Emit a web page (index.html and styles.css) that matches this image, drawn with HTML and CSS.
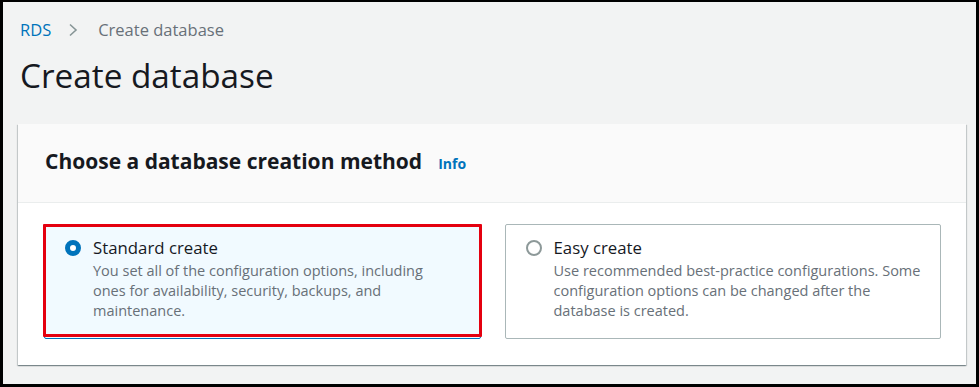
FILE: index.html
```html
<!DOCTYPE html>
<html lang="en">
<head>
    <meta charset="UTF-8">
    <meta name="viewport" content="width=device-width, initial-scale=1.0">
    <title>Create database</title>
    <link rel="stylesheet" href="styles.css">
</head>
<body>
    <div class="screen">
        <nav class="breadcrumb">
            <a href="#" class="crumb-link">RDS</a>
            <svg class="crumb-sep" width="10" height="14" viewBox="0 0 10 14">
                <polyline points="2,1.5 8,7 2,12.5" fill="none" stroke="#879596" stroke-width="1.6"/>
            </svg>
            <span class="crumb-current">Create database</span>
        </nav>

        <h1 class="page-title">Create database</h1>

        <div class="card">
            <div class="card-header">
                <h2>Choose a database creation method</h2>
                <a href="#" class="info-link">Info</a>
            </div>
            <div class="card-body">
                <!-- creation method tiles -->
                <label class="tile selected">
                    <span class="radio checked"></span>
                    <span class="tile-text">
                        <span class="tile-label">Standard create</span>
                        <span class="tile-desc">You set all of the configuration options, including ones for availability, security, backups, and maintenance.</span>
                    </span>
                </label>
                <label class="tile">
                    <span class="radio"></span>
                    <span class="tile-text">
                        <span class="tile-label">Easy create</span>
                        <span class="tile-desc">Use recommended best-practice configurations. Some configuration options can be changed after the database is created.</span>
                    </span>
                </label>
            </div>
        </div>
    </div>
</body>
</html>
```

FILE: styles.css
```css
html, body {
    margin: 0;
    padding: 0;
    background: #000;
}

body {
    font-family: "Open Sans", "Noto Sans", Arial, sans-serif;
    color: #16191f;
}

.screen {
    box-sizing: border-box;
    width: 979px;
    height: 387px;
    border-style: solid;
    border-color: #000;
    border-width: 2px 3px 3px 3px;
    background: #f2f3f3;
    padding: 17px 12px 0 17px;
    overflow: hidden;
}

.breadcrumb {
    display: flex;
    align-items: center;
    height: 22px;
    font-size: 16.5px;
    line-height: 22px;
}

.crumb-link {
    color: #0073bb;
    text-decoration: none;
}

.crumb-sep {
    margin: 0 20px 0 17px;
}

.crumb-current {
    color: #687078;
}

.page-title {
    margin: 14px 0 0;
    font-size: 33.3px;
    line-height: 40px;
    font-weight: 400;
    color: #16191f;
}

.card {
    margin: 29px 0 0 -2px;
    width: 948px;
    background: #fff;
    box-shadow: 0 1px 1px 0 rgba(0, 28, 36, 0.3), 1px 1px 1px 0 rgba(0, 28, 36, 0.15), -1px 1px 1px 0 rgba(0, 28, 36, 0.15);
}

.card-header {
    display: flex;
    align-items: baseline;
    height: 79px;
    box-sizing: border-box;
    padding: 23px 27px 0;
    background: #fafafa;
    border-bottom: 1px solid #eaeded;
}

.card-header h2 {
    margin: 0;
    font-size: 21px;
    line-height: 28px;
    font-weight: 700;
    color: #16191f;
}

.info-link {
    margin-left: 16px;
    font-size: 14px;
    font-weight: 700;
    color: #0073bb;
    text-decoration: none;
}

.card-body {
    display: grid;
    grid-template-columns: 1fr 1fr;
    gap: 24px;
    padding: 21px 25px 26px 26px;
}

.tile {
    position: relative;
    display: flex;
    align-items: flex-start;
    gap: 12px;
    padding: 12px 12px 17px 20px;
    border: 1px solid #aab7b8;
    border-radius: 2px;
    background: #fff;
}

.tile.selected {
    padding-right: 26px;
    border-color: #0073bb;
    background: #f1faff;
}

/* red highlight drawn over the chosen tile */
.tile.selected::after {
    content: "";
    position: absolute;
    top: -1px;
    left: -2px;
    right: -2px;
    bottom: 1px;
    border: 3px solid #e4000f;
    border-radius: 1px;
}

.radio {
    flex-shrink: 0;
    box-sizing: border-box;
    width: 16px;
    height: 16px;
    margin-top: 3px;
    border-radius: 50%;
    border: 2px solid #8d9999;
    background: #fff;
}

.radio.checked {
    border: 5px solid #0073bb;
}

.tile-text {
    display: flex;
    flex-direction: column;
}

.tile-label {
    font-size: 16.8px;
    line-height: 22px;
    color: #16191f;
}

.tile-desc {
    margin-top: 2px;
    font-size: 14.5px;
    line-height: 20px;
    color: #687078;
}
```
